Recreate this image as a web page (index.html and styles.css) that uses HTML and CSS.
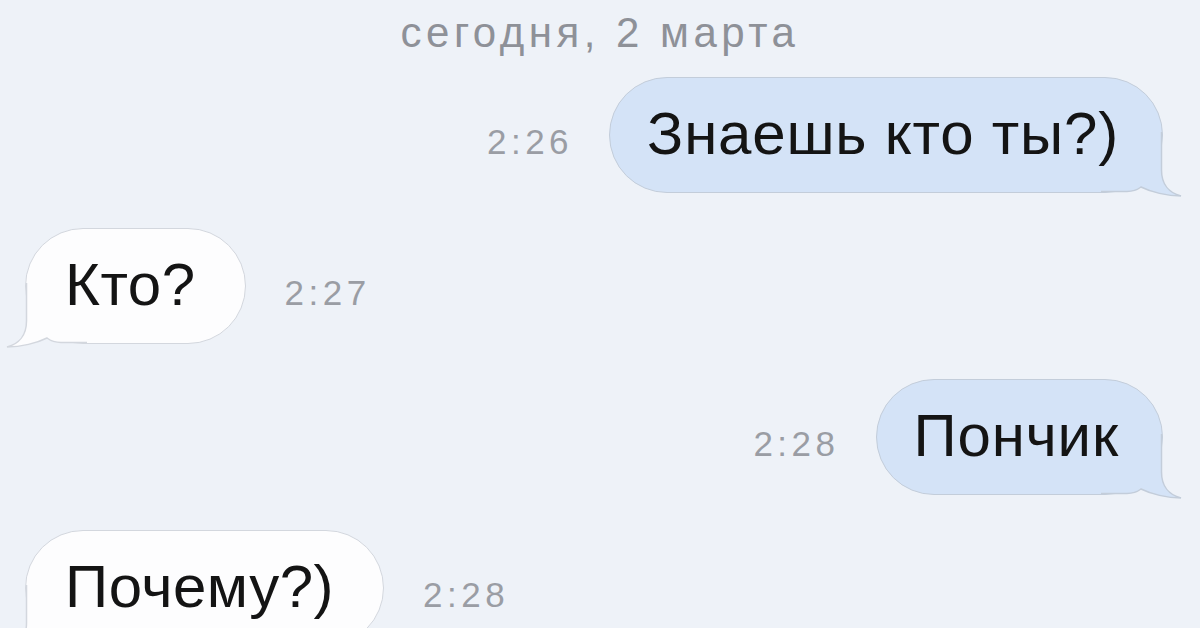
FILE: index.html
```html
<!DOCTYPE html>
<html lang="ru">
<head>
  <meta charset="UTF-8">
  <meta name="viewport" content="width=device-width, initial-scale=1.0">
  <title>Сообщения</title>
  <link rel="stylesheet" href="styles.css">
</head>
<body>
  <div class="chat">
    <div class="date">сегодня, 2 марта</div>

    <div class="row out">
      <span class="time">2:26</span>
      <div class="bubble">
        <span class="text">Знаешь кто ты?)</span>
        <svg class="tail" viewBox="0 0 85 66" width="85" height="66">
          <path class="tail-fill" d="M0 0 L60.5 0 L60.5 38 C60.5 52 68 61 80 64 C66 64 50 60 40 55 C36 58 32 59.5 26 59.5 L0 59.5 Z"/>
          <path class="tail-line" d="M0 59.5 L26 59.5 C32 59.5 36 58 40 55 C50 60 66 64 80 64 C68 61 60.5 52 60.5 38 L60.5 0"/>
        </svg>
      </div>
    </div>

    <div class="row in">
      <div class="bubble">
        <span class="text">Кто?</span>
        <svg class="tail" viewBox="0 0 85 66" width="85" height="66">
          <path class="tail-fill" d="M0 0 L60.5 0 L60.5 38 C60.5 52 68 61 80 64 C66 64 50 60 40 55 C36 58 32 59.5 26 59.5 L0 59.5 Z"/>
          <path class="tail-line" d="M0 59.5 L26 59.5 C32 59.5 36 58 40 55 C50 60 66 64 80 64 C68 61 60.5 52 60.5 38 L60.5 0"/>
        </svg>
      </div>
      <span class="time">2:27</span>
    </div>

    <div class="row out">
      <span class="time">2:28</span>
      <div class="bubble">
        <span class="text">Пончик</span>
        <svg class="tail" viewBox="0 0 85 66" width="85" height="66">
          <path class="tail-fill" d="M0 0 L60.5 0 L60.5 38 C60.5 52 68 61 80 64 C66 64 50 60 40 55 C36 58 32 59.5 26 59.5 L0 59.5 Z"/>
          <path class="tail-line" d="M0 59.5 L26 59.5 C32 59.5 36 58 40 55 C50 60 66 64 80 64 C68 61 60.5 52 60.5 38 L60.5 0"/>
        </svg>
      </div>
    </div>

    <div class="row in">
      <div class="bubble">
        <span class="text">Почему?)</span>
        <svg class="tail" viewBox="0 0 85 66" width="85" height="66">
          <path class="tail-fill" d="M0 0 L60.5 0 L60.5 38 C60.5 52 68 61 80 64 C66 64 50 60 40 55 C36 58 32 59.5 26 59.5 L0 59.5 Z"/>
          <path class="tail-line" d="M0 59.5 L26 59.5 C32 59.5 36 58 40 55 C50 60 66 64 80 64 C68 61 60.5 52 60.5 38 L60.5 0"/>
        </svg>
      </div>
      <span class="time">2:28</span>
    </div>
  </div>
</body>
</html>
```

FILE: styles.css
```css
/* General Styles */
body {
  font-family: "Liberation Sans", Arial, sans-serif;
  background-color: #eef2f8;
  margin: 0;
  padding: 0;
  height: 628px;
  overflow: hidden;
}

.chat {
  display: flex;
  flex-direction: column;
  gap: 35px;
}

.date {
  text-align: center;
  color: #8e9198;
  font-size: 42px;
  letter-spacing: 4.5px;
  line-height: 66px;
  margin-bottom: -24px;
}

.row {
  display: flex;
  align-items: baseline;
  gap: 36px;
}

.row.out {
  justify-content: flex-end;
  padding-right: 37px;
}

.row.in {
  padding-left: 25px;
  gap: 39px;
}

.bubble {
  position: relative;
  font-size: 60px;
  line-height: 68px;
  letter-spacing: 0.8px;
  color: #141414;
  padding: 22px 43px 24px 37px;
  border-radius: 58px;
  border: 1.5px solid #c3cdda;
}

.text {
  position: relative;
  z-index: 1;
}

.out .bubble {
  background-color: #d4e3f7;
}

.in .bubble {
  background-color: #fdfdfe;
  border-color: #d3d7de;
  letter-spacing: 0.5px;
  padding-left: 39px;
  padding-right: 49px;
}

.tail {
  position: absolute;
  right: -23.75px;
  bottom: -5.75px;
}

.in .tail {
  right: auto;
  left: -23.75px;
  transform: scaleX(-1);
}

.tail-fill {
  stroke: none;
}

.out .tail-fill {
  fill: #d4e3f7;
}

.in .tail-fill {
  fill: #fdfdfe;
}

.tail-line {
  fill: none;
  stroke-width: 1.5;
}

.out .tail-line {
  stroke: #c3cdda;
}

.in .tail-line {
  stroke: #d3d7de;
}

.time {
  font-size: 35px;
  letter-spacing: 4.5px;
  color: #9a9da4;
}
```
